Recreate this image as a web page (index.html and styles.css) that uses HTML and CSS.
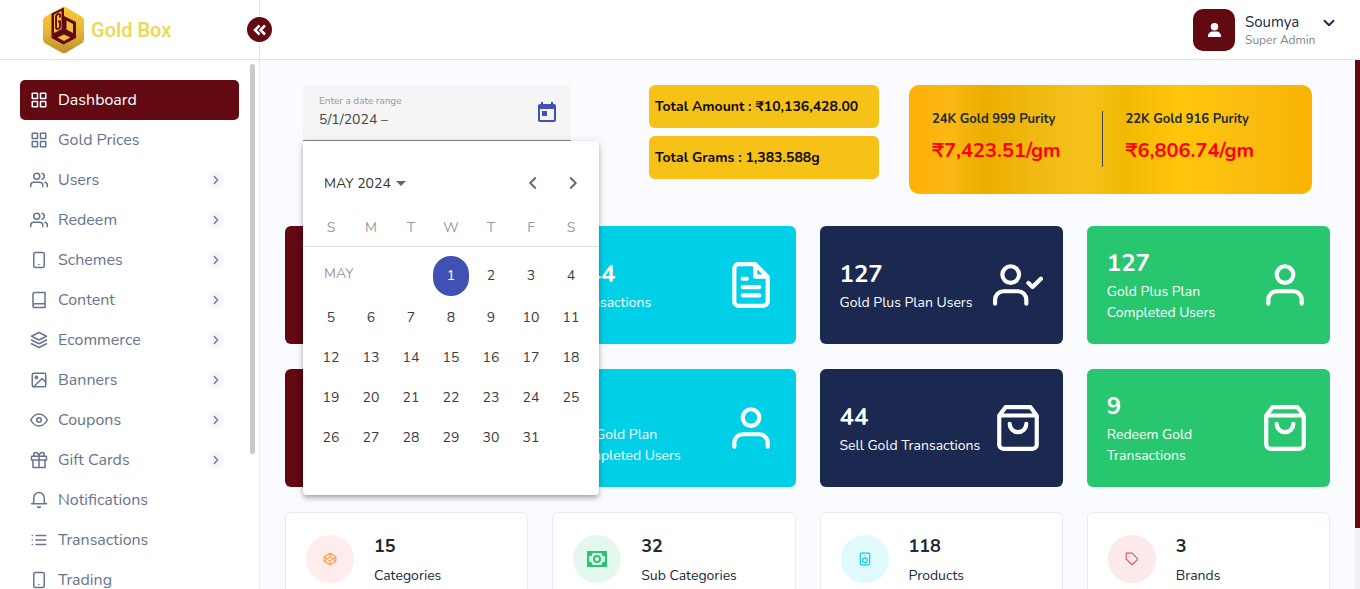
FILE: index.html
```html
<!DOCTYPE html>
<html lang="en">
<head>
<meta charset="utf-8">
<meta name="viewport" content="width=device-width, initial-scale=1">
<title>Gold Box – Dashboard</title>
<link rel="stylesheet" href="styles.css">
</head>
<body>
<svg class="sprite" aria-hidden="true">
  <symbol id="grid" viewBox="0 0 24 24"><path d="M3 3h7v7H3zM14 3h7v7h-7zM14 14h7v7h-7zM3 14h7v7H3z"/></symbol>
  <symbol id="users" viewBox="0 0 24 24"><path d="M17 21v-2a4 4 0 0 0-4-4H5a4 4 0 0 0-4 4v2M23 21v-2a4 4 0 0 0-3-3.87M16 3.13a4 4 0 0 1 0 7.75"/><circle cx="9" cy="7" r="4"/></symbol>
  <symbol id="phone" viewBox="0 0 24 24"><rect x="5" y="2" width="14" height="20" rx="2"/><path d="M12 18h.01"/></symbol>
  <symbol id="book" viewBox="0 0 24 24"><path d="M4 19.5A2.5 2.5 0 0 1 6.500 17H20M6.500 2H20v20H6.500A2.500 2.500 0 0 1 4 19.500v-15A2.500 2.500 0 0 1 6.500 2z"/></symbol>
  <symbol id="layers" viewBox="0 0 24 24"><path d="M12 2 2 7l10 5 10-5zM2 17l10 5 10-5M2 12l10 5 10-5"/></symbol>
  <symbol id="image" viewBox="0 0 24 24"><rect x="3" y="3" width="18" height="18" rx="2"/><circle cx="8.500" cy="8.500" r="1.500"/><path d="m21 15-5-5L5 21"/></symbol>
  <symbol id="eye" viewBox="0 0 24 24"><path d="M1 12s4-8 11-8 11 8 11 8-4 8-11 8S1 12 1 12z"/><circle cx="12" cy="12" r="3"/></symbol>
  <symbol id="gift" viewBox="0 0 24 24"><path d="M20 12v10H4V12M2 7h20v5H2zM12 22V7M12 7H7.500a2.500 2.500 0 0 1 0-5C11 2 12 7 12 7zM12 7h4.500a2.500 2.500 0 0 0 0-5C13 2 12 7 12 7z"/></symbol>
  <symbol id="bell" viewBox="0 0 24 24"><path d="M22 17H2a3 3 0 0 0 3-3V9a7 7 0 0 1 14 0v5a3 3 0 0 0 3 3zM13.730 21a2 2 0 0 1-3.460 0"/></symbol>
  <symbol id="list" viewBox="0 0 24 24"><path d="M8 6h13M8 12h13M8 18h13M3 6h.01M3 12h.01M3 18h.01"/></symbol>
  <symbol id="next" viewBox="0 0 24 24"><path d="m9 18 6-6-6-6"/></symbol>
  <symbol id="prev" viewBox="0 0 24 24"><path d="m15 18-6-6 6-6"/></symbol>
  <symbol id="down" viewBox="0 0 24 24"><path d="m6 9 6 6 6-6"/></symbol>
  <symbol id="file" viewBox="0 0 24 24"><path d="M14 2H6a2 2 0 0 0-2 2v16a2 2 0 0 0 2 2h12a2 2 0 0 0 2-2V8zM14 2v6h6M16 13H8M16 17H8M10 9H8"/></symbol>
  <symbol id="user" viewBox="0 0 24 24"><path d="M20 21v-2a4 4 0 0 0-4-4H8a4 4 0 0 0-4 4v2"/><circle cx="12" cy="7" r="4"/></symbol>
  <symbol id="user-check" viewBox="0 0 24 24"><path d="M16 21v-2a4 4 0 0 0-4-4H5a4 4 0 0 0-4 4v2M17 11l2 2 4-4"/><circle cx="8.500" cy="7" r="4"/></symbol>
  <symbol id="bag" viewBox="0 0 24 24"><path d="M6 2 3 6v14a2 2 0 0 0 2 2h14a2 2 0 0 0 2-2V6l-3-4zM3 6h18M16 10a4 4 0 0 1-8 0"/></symbol>
</svg>

<header class="topbar">
  <a class="brand" href="#">
    <svg class="brand-mark" viewBox="0 0 42 48" aria-hidden="true">
      <defs><linearGradient id="gold" x1="0" y1="0" x2="0" y2="1"><stop offset="0" stop-color="#fbc832"/><stop offset=".5" stop-color="#e9b637"/><stop offset="1" stop-color="#c08f2e"/></linearGradient></defs>
      <path fill="url(#gold)" d="M19.500 1.500q2.500-1.500 5 0l15 9q2.500 1.500 2.500 4v19q0 2.500-2.500 4l-15 9q-2.500 1.500-5 0L3.500 37.500Q1 36 1 33.500v-19q0-2.500 2.500-4z"/>
      <path fill="#620912" d="M9.500 7.500 22 1.500V10l12 6v16l-12.500 6.500-12-6.500z"/>
      <path fill="#f3c036" d="m12 8.500 7.500-3.500v18L12 27z"/>
      <path fill="none" stroke="#620912" stroke-width="1.900" d="M18 11.500V9c0-1.800-4-1-4 1.500v11c0 2.500 4 1.500 4-1v-5h-2"/>
      <path fill="#efbd39" d="m24.500 14.500 6.500 3.500v9l-6.500-3.500zM22 28.500l6.500 3-6.500 3.500-6.500-3.500z"/>
    </svg>
    <span>Gold Box</span>
  </a>
  <button class="collapse" aria-label="Collapse menu"><svg viewBox="0 0 14 14"><path d="M6.500 2.500 2 7l4.500 4.500M12 2.500 7.500 7l4.500 4.500"/></svg></button>
  <button class="account">
    <span class="avatar"><svg viewBox="0 0 16 16" aria-hidden="true"><circle cx="8" cy="4.500" r="4"/><path d="M1 15.500v-1C1 11.500 3.500 9.500 6 9.500h4c2.500 0 5 2 5 5v1z"/></svg></span>
    <span class="who"><span class="name">Soumya</span><span class="role">Super Admin</span></span>
    <svg class="icon caret"><use href="#down"/></svg>
  </button>
</header>

<div class="shell">
  <aside class="sidebar">
    <nav class="menu">
      <a class="item active" href="#"><svg class="icon"><use href="#grid"/></svg><span>Dashboard</span></a>
      <a class="item" href="#"><svg class="icon"><use href="#grid"/></svg><span>Gold Prices</span></a>
      <a class="item" href="#"><svg class="icon"><use href="#users"/></svg><span>Users</span><i class="more"><svg class="icon"><use href="#next"/></svg></i></a>
      <a class="item" href="#"><svg class="icon"><use href="#users"/></svg><span>Redeem</span><i class="more"><svg class="icon"><use href="#next"/></svg></i></a>
      <a class="item" href="#"><svg class="icon"><use href="#phone"/></svg><span>Schemes</span><i class="more"><svg class="icon"><use href="#next"/></svg></i></a>
      <a class="item" href="#"><svg class="icon"><use href="#book"/></svg><span>Content</span><i class="more"><svg class="icon"><use href="#next"/></svg></i></a>
      <a class="item" href="#"><svg class="icon"><use href="#layers"/></svg><span>Ecommerce</span><i class="more"><svg class="icon"><use href="#next"/></svg></i></a>
      <a class="item" href="#"><svg class="icon"><use href="#image"/></svg><span>Banners</span><i class="more"><svg class="icon"><use href="#next"/></svg></i></a>
      <a class="item" href="#"><svg class="icon"><use href="#eye"/></svg><span>Coupons</span><i class="more"><svg class="icon"><use href="#next"/></svg></i></a>
      <a class="item" href="#"><svg class="icon"><use href="#gift"/></svg><span>Gift Cards</span><i class="more"><svg class="icon"><use href="#next"/></svg></i></a>
      <a class="item" href="#"><svg class="icon"><use href="#bell"/></svg><span>Notifications</span></a>
      <a class="item" href="#"><svg class="icon"><use href="#list"/></svg><span>Transactions</span></a>
      <a class="item" href="#"><svg class="icon"><use href="#phone"/></svg><span>Trading</span></a>
    </nav>
    <div class="menu-scroll"></div>
  </aside>

  <main class="content">
    <section class="summary">
      <div class="range">
        <div class="field">
          <div class="field-text">
            <label for="range">Enter a date range</label>
            <input id="range" type="text" value="5/1/2024 –">
          </div>
          <button class="open-cal" aria-label="Open calendar"><svg viewBox="0 0 24 24"><path d="M19 3h-1V1h-2v2H8V1H6v2H5c-1.110 0-2 .9-2 2v14c0 1.100.89 2 2 2h14c1.100 0 2-.9 2-2V5c0-1.100-.9-2-2-2zm0 16H5V8h14v11zM7 10h5v5H7z"/></svg></button>
        </div>
        <div class="calendar">
          <div class="cal-head">
            <button class="period">MAY 2024<svg viewBox="0 0 10 5"><path d="M0 0h10L5 5z"/></svg></button>
            <button class="step" aria-label="Previous month"><svg class="icon"><use href="#prev"/></svg></button>
            <button class="step" aria-label="Next month"><svg class="icon"><use href="#next"/></svg></button>
          </div>
          <table class="days">
            <thead><tr><th>S</th><th>M</th><th>T</th><th>W</th><th>T</th><th>F</th><th>S</th></tr></thead>
            <tbody>
              <tr class="first"><td class="month" colspan="3">MAY</td><td><button class="selected">1</button></td><td><button>2</button></td><td><button>3</button></td><td><button>4</button></td></tr>
              <tr><td><button>5</button></td><td><button>6</button></td><td><button>7</button></td><td><button>8</button></td><td><button>9</button></td><td><button>10</button></td><td><button>11</button></td></tr>
              <tr><td><button>12</button></td><td><button>13</button></td><td><button>14</button></td><td><button>15</button></td><td><button>16</button></td><td><button>17</button></td><td><button>18</button></td></tr>
              <tr><td><button>19</button></td><td><button>20</button></td><td><button>21</button></td><td><button>22</button></td><td><button>23</button></td><td><button>24</button></td><td><button>25</button></td></tr>
              <tr><td><button>26</button></td><td><button>27</button></td><td><button>28</button></td><td><button>29</button></td><td><button>30</button></td><td><button>31</button></td><td></td></tr>
            </tbody>
          </table>
        </div>
      </div>
      <div class="totals">
        <p>Total Amount : ₹10,136,428.00</p>
        <p>Total Grams : 1,383.588g</p>
      </div>
      <div class="rates">
        <div class="rate"><span>24K Gold 999 Purity</span><strong>₹7,423.51/gm</strong></div>
        <div class="rate"><span>22K Gold 916 Purity</span><strong>₹6,806.74/gm</strong></div>
      </div>
    </section>

    <section class="cards">
      <article class="tile maroon"></article>
      <article class="tile cyan"><div><h2>144</h2><p>Transactions</p></div><svg class="icon"><use href="#file"/></svg></article>
      <article class="tile navy"><div><h2>127</h2><p>Gold Plus Plan Users</p></div><svg class="icon"><use href="#user-check"/></svg></article>
      <article class="tile green"><div><h2>127</h2><p>Gold Plus Plan Completed Users</p></div><svg class="icon"><use href="#user"/></svg></article>
      <article class="tile maroon"></article>
      <article class="tile cyan"><div><h2>0</h2><p>My Gold Plan Completed Users</p></div><svg class="icon"><use href="#user"/></svg></article>
      <article class="tile navy"><div><h2>44</h2><p>Sell Gold Transactions</p></div><svg class="icon"><use href="#bag"/></svg></article>
      <article class="tile green"><div><h2>9</h2><p>Redeem Gold Transactions</p></div><svg class="icon"><use href="#bag"/></svg></article>

      <article class="stat"><span class="dot peach"><svg class="icon thin" viewBox="0 0 24 24"><path d="m12 2 10 6v8l-10 6-10-6V8zM12 2v6M12 16v6M2 8l10 8 10-8M2 16l10-8 10 8"/></svg></span><div><h3>15</h3><p>Categories</p></div></article>
      <article class="stat"><span class="dot mint"><svg class="note" viewBox="0 0 20 16"><path fill-rule="evenodd" d="M0 0h20v16H0zM5.500 2A3.500 3.500 0 0 1 2 5.500v5A3.500 3.500 0 0 1 5.500 14h9a3.500 3.500 0 0 1 3.500-3.500v-5A3.500 3.500 0 0 1 14.500 2zM10 4a4 4 0 1 1 0 8 4 4 0 0 1 0-8zm0 2a2 2 0 1 0 0 4 2 2 0 0 0 0-4z"/></svg></span><div><h3>32</h3><p>Sub Categories</p></div></article>
      <article class="stat"><span class="dot ice"><svg class="icon thin" viewBox="0 0 24 24"><rect x="4" y="2" width="16" height="20" rx="2"/><circle cx="12" cy="14" r="4"/><path d="M12 6h.01"/></svg></span><div><h3>118</h3><p>Products</p></div></article>
      <article class="stat"><span class="dot rose"><svg class="icon thin" viewBox="0 0 24 24"><path d="M20.590 13.410 13.420 20.580a2 2 0 0 1-2.830 0L2 12V2h10l8.590 8.590a2 2 0 0 1 0 2.820zM7 7h.01"/></svg></span><div><h3>3</h3><p>Brands</p></div></article>
    </section>
  </main>
  <div class="page-scroll"></div>
</div>
</body>
</html>
```

FILE: styles.css
```css
* { box-sizing: border-box; }
body {
  margin: 0;
  height: 100vh;
  overflow: hidden;
  display: flex;
  flex-direction: column;
  font-family: Nunito, Lato, "Noto Sans", sans-serif;
  font-size: 14px;
  color: #212b36;
  background: #fff;
}
h2, h3, p { margin: 0; }
a { color: inherit; text-decoration: none; }
button {
  margin: 0; padding: 0; border: 0;
  background: none; color: inherit; font: inherit;
}
.sprite { position: absolute; width: 0; height: 0; }
.icon {
  flex: none;
  fill: none;
  stroke: currentColor;
  stroke-width: 2;
  stroke-linecap: round;
  stroke-linejoin: round;
}

/* top bar */
.topbar {
  position: relative;
  flex: none;
  display: flex;
  justify-content: space-between;
  height: 60px;
  padding-right: 22px;
  border-bottom: 1px solid #dee2e6;
}
.brand {
  display: flex;
  align-items: center;
  gap: 7px;
  width: 260px;
  padding-left: 42px;
  border-right: 1px solid #e3e6ea;
  font: 600 20px Roboto, sans-serif;
  color: #ebda5a;
}
.brand-mark { width: 42px; height: 48px; }
.collapse {
  position: absolute;
  left: 247px; top: 17px;
  display: grid;
  place-items: center;
  width: 25px; height: 25px;
  border-radius: 50%;
  background: #620912;
}
.collapse svg { width: 14px; height: 14px; fill: none; stroke: #fff; stroke-width: 2.500; }
.account { display: flex; align-items: center; gap: 10px; text-align: left; }
.avatar {
  display: grid;
  place-items: center;
  width: 42px; height: 42px;
  border-radius: 10px;
  background: #620912;
}
.avatar svg { width: 15px; height: 16px; fill: #fff; }
.who { display: flex; flex-direction: column; width: 71px; white-space: nowrap; }
.name { font-size: 15px; line-height: 20px; color: #1b2850; }
.role { font-size: 12px; line-height: 16px; color: #7e858e; }
.caret { width: 18px; height: 18px; margin: 0 0 14px -6px; color: #1b2850; stroke-width: 2.500; }

/* side menu */
.shell { flex: 1; min-height: 0; display: flex; }
.sidebar {
  flex: none;
  display: flex;
  width: 260px;
  padding-left: 20px;
  border-right: 1px solid #e8ebed;
  overflow: hidden;
}
.menu { width: 219px; padding-top: 20px; }
.item {
  display: flex;
  align-items: center;
  gap: 10px;
  height: 40px;
  padding: 0 15px 0 10px;
  border-radius: 5px;
  font-size: 16px;
  color: #67748e;
}
.item > .icon { width: 18px; height: 18px; }
.item.active { background: #620912; color: #fff; }
.more {
  display: grid;
  place-items: center;
  width: 16px; height: 16px;
  margin-left: auto;
  border-radius: 50%;
  background: #f5f6f8;
}
.more .icon { width: 14px; height: 14px; }
.menu-scroll { width: 5px; height: 390px; margin: 4px 0 0 11px; border-radius: 3px; background: #c9c9c9; }

/* page body */
.content { flex: 1; min-width: 0; padding: 25px; overflow: hidden; background: #fafbfe; }
.page-scroll { width: 5px; background: linear-gradient(#620912 468px, #f1f1f1 468px); }
.summary {
  display: grid;
  grid-template-columns: 316fr 230fr 403fr;
  gap: 30px;
  padding: 0 18px;
  margin-bottom: 32px;
}
.range { position: relative; padding-right: 48px; }
.field {
  display: flex;
  align-items: center;
  justify-content: space-between;
  height: 56px;
  padding: 0 12px 0 16px;
  border-bottom: 1px solid #858585;
  border-radius: 4px 4px 0 0;
  background: #f5f5f5;
}
.field-text { display: flex; flex-direction: column; gap: 1px; min-width: 0; padding-bottom: 3px; }
.field label { font-size: 10px; line-height: 16px; color: #999; }
.field input {
  width: 160px;
  height: 20px;
  padding: 0;
  border: 0;
  outline: 0;
  background: none;
  font: inherit;
  color: #444;
}
.open-cal { width: 24px; height: 24px; }
.open-cal svg { display: block; fill: #3f51b5; }
.calendar {
  position: absolute;
  z-index: 2;
  top: 56px; left: 0;
  width: 296px;
  padding: 22px 0 38px;
  border-radius: 4px;
  background: #fff;
  box-shadow: 0 2px 4px -1px rgba(0,0,0,.2), 0 4px 5px rgba(0,0,0,.14), 0 1px 10px rgba(0,0,0,.12);
}
.cal-head { display: flex; align-items: center; height: 40px; margin-bottom: 4px; padding: 0 6px 0 21px; color: #333; }
.period { display: flex; align-items: center; gap: 5px; margin-right: auto; }
.period svg { width: 10px; height: 5px; fill: #666; }
.step { display: grid; place-items: center; width: 40px; height: 40px; color: #666; }
.step .icon { width: 22px; height: 22px; stroke-linecap: butt; stroke-linejoin: miter; }
.days { width: 100%; table-layout: fixed; border-collapse: separate; border-spacing: 0; }
.days th, .days td { height: 40px; padding: 0; text-align: center; font-weight: 400; }
.days th { padding-top: 2px; border-bottom: 1px solid #e0e0e0; color: #9a9a9a; }
.days tr > :first-child { padding-left: 8px; width: 48px; }
.days tr > :last-child { padding-right: 8px; width: 48px; }
.days .first td { height: 50px; padding-top: 8px; }
.days .first .month { padding: 3px 0 0 21px; text-align: left; color: #999; }
.days button { display: block; width: 36px; height: 40px; margin: 0 auto; color: #3d3d3d; }
.days .first button { padding-bottom: 1px; }
.days .selected { border-radius: 18px; background: #3f51b5; color: #fff; }

.totals { display: flex; flex-direction: column; gap: 8px; }
.totals p {
  height: 43px;
  padding-left: 6px;
  border-radius: 6px;
  background: #f6c217;
  font-weight: 700;
  line-height: 43px;
  color: #0b0b0b;
  white-space: nowrap;
}
.rates {
  display: grid;
  grid-template-columns: 1fr 1fr;
  align-items: center;
  height: 109px;
  padding: 0 18px 2px 0;
  border-radius: 10px;
  background: linear-gradient(90deg, #ffb007, #fab814 10%, #ecae00 19%, #f0b810 30%, #f5c21b 44%, #f1b902 54%, #ffc60b 67%, #fabc10 85%, #fbb300);
}
.rate { display: flex; flex-direction: column; height: 56px; padding-left: 23px; white-space: nowrap; }
.rate + .rate { border-left: 1px solid #444; }
.rate span { font-size: 13px; font-weight: 700; line-height: 16px; }
.rate strong { margin-top: 8px; font-size: 20px; font-weight: 700; line-height: 32px; color: #f00; }

/* cards */
.cards { display: grid; grid-template-columns: repeat(4, 1fr); gap: 25px 24px; }
.tile {
  display: flex;
  align-items: center;
  justify-content: space-between;
  height: 118px;
  padding: 0 20px;
  border-radius: 6px;
  color: #fff;
}
.tile > div { flex: 1; }
.tile h2 { margin-bottom: 2px; font-size: 24px; font-weight: 700; line-height: 32px; }
.tile p { line-height: 21px; }
.tile .icon { width: 50px; height: 50px; }
.maroon { background: #620912; }
.cyan { background: #00cfe8; }
.navy { background: #1b2850; }
.green { background: #28c76f; }
.cyan p, .green p { max-width: 120px; }
.navy > div { white-space: nowrap; }
.stat {
  display: flex;
  align-items: flex-start;
  gap: 20px;
  padding: 22px 20px;
  border: 1px solid #e8ebed;
  border-radius: 6px;
  background: #fff;
}
.stat h3 { margin-bottom: 8px; font-size: 18px; font-weight: 700; line-height: 22px; }
.stat p { line-height: 21px; }
.dot { display: grid; place-items: center; width: 48px; height: 48px; border-radius: 50%; }
.dot .thin { width: 14px; height: 14px; }
.note { width: 20px; height: 16px; fill: currentColor; }
.peach { background: #ffeded; color: #ff9f43; }
.mint { background: #e4f8ed; color: #28c76f; }
.ice { background: #e0f9fc; color: #00cfe8; }
.rose { background: #fce9e9; color: #ea5455; }
```
